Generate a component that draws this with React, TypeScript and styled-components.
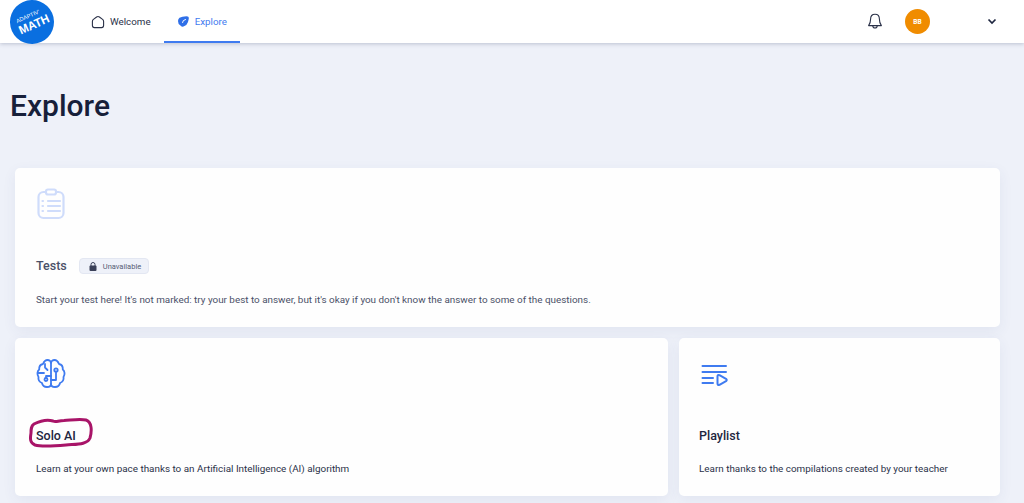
import React from "react";
import styled, { createGlobalStyle } from "styled-components";

const Global = createGlobalStyle`
  html, body { margin: 0; padding: 0; background: #eef1f9; }
  body { font-family: Roboto, "Liberation Sans", sans-serif; color: #1e2640; overflow: hidden; }
`;
const Page = styled.div`
  width: 1024px; height: 503px; overflow: hidden; display: flex; flex-direction: column;
`;
const Header = styled.header`
  height: 43px; flex: none; background: #fff; display: flex; align-items: stretch;
  box-shadow: 0 1px 4px rgba(40, 50, 90, 0.25); padding: 0 27px 0 10px; position: relative; z-index: 1;
`;
const Logo = styled.div`
  width: 44px; height: 44px; border-radius: 50%; background: #0a6fe0; color: #fff; flex: none;
  margin-right: 24px; display: flex; flex-direction: column; align-items: center; justify-content: center;
  transform: rotate(-24deg); line-height: 1; font-family: "Liberation Sans", sans-serif;
`;
const LogoSmall = styled.span`font-size: 5.6px; font-weight: 400; margin: 0 0 1px -3px;`;
const LogoBig = styled.span`font-size: 12px; font-weight: 700; margin-left: 2px; transform: scaleX(0.95);`;
const Tab = styled.div<{ $active?: boolean }>`
  display: flex; align-items: center; gap: 5px; padding: 0 13px; font-size: 9.8px; font-weight: 400;
  color: ${p => (p.$active ? "#3f7bf0" : "#2a3148")};
  box-shadow: ${p => (p.$active ? "inset 0 -2px 0 #3f7bf0" : "none")};
`;
const Spacer = styled.div`flex: 1;`;
const HeaderRight = styled.div`display: flex; align-items: center;`;
const Avatar = styled.div`
  width: 25px; height: 25px; border-radius: 50%; background: #f08c00; color: #fff; font-size: 6.5px; font-weight: 700;
  display: flex; align-items: center; justify-content: center; margin: 0 57px 0 22px;
`;
const Main = styled.main`padding: 0 24px 0 10px; display: flex; flex-direction: column;`;
const Title = styled.h1`
  margin: 46px 0 46px; font-size: 30px; line-height: 33px; font-weight: 500; color: #17203a;
`;
const Cards = styled.div`
  display: grid; grid-template-columns: 653px 321px; grid-template-rows: 159px 158px; gap: 11px; margin-left: 5px;
`;
const Card = styled.section<{ $wide?: boolean; $inset?: number }>`
  position: relative; background: #fefefe; border-radius: 5px; padding: 20px 20px 20px ${p => p.$inset ?? 21}px; box-sizing: border-box;
  display: flex; flex-direction: column; box-shadow: 0 4px 14px rgba(60, 75, 130, 0.07);
  grid-column: ${p => (p.$wide ? "1 / span 2" : "auto")};
`;
const IconSlot = styled.div`height: 34px; flex: none;`;
const TitleRow = styled.div`display: flex; align-items: center; gap: 12px; margin-top: 35px; height: 18px;`;
const CardTitle = styled.h2<{ $muted?: boolean }>`
  margin: 0; font-size: 12.5px; line-height: 18px; font-weight: 500; color: ${p => (p.$muted ? "#4a5068" : "#1e2640")};
`;
const Badge = styled.span`
  display: inline-flex; align-items: center; gap: 6px; height: 14px; padding: 0 7px 0 9px; border-radius: 4px;
  background: #eef1f9; border: 1px solid #e3e7f2; color: #565c74; font-size: 7.5px; font-weight: 400;
`;
const Desc = styled.p<{ $muted?: boolean }>`
  margin: auto 0 0; font-size: 9.9px; line-height: 14px; color: ${p => (p.$muted ? "#4a5068" : "#2a3148")};
`;
const Scribble = styled.svg`position: absolute; left: 13px; top: 79px; pointer-events: none;`;

export default function App() {
  return (
    <Page>
      <Global />
      <Header>
        <Logo>
          <LogoSmall>ADAPTIV'</LogoSmall>
          <LogoBig>MATH</LogoBig>
        </Logo>
        <Tab>
          <svg width="14" height="14" viewBox="0 0 14 14" fill="none" stroke="#2a3148" strokeWidth="1.1">
            <path d="M5.6 2 Q7 1 8.4 2 L11.6 4.4 Q12.6 5.2 12.6 6.4 V10.6 Q12.6 12.6 10.6 12.6 H3.4 Q1.4 12.6 1.4 10.6 V6.4 Q1.4 5.2 2.4 4.4 Z" strokeLinejoin="round" />
          </svg>
          Welcome
        </Tab>
        <Tab $active>
          <svg width="13" height="13" viewBox="0 0 13 13" fill="#2f6fe8">
            <path d="M2.5 2.8 Q5 1.2 9.5 1.2 Q12 1.2 11.8 3.5 Q11.5 5 11 7 Q10 10.5 6.5 11.6 Q4.2 12.2 3.2 10.3 Q1 9 1 6 Q1 4 2.5 2.8Z" />
            <path d="M5.5 7.5 Q5.5 5 8.5 4.5" fill="none" stroke="#fff" strokeWidth="1" strokeLinecap="round" />
          </svg>
          Explore
        </Tab>
        <Spacer />
        <HeaderRight>
          <svg width="16" height="17" viewBox="0 0 16 17" fill="none" stroke="#2a3148" strokeWidth="1.1" strokeLinejoin="round">
            <path d="M8 1.2 C5 1.2 3.6 3.4 3.6 6 C3.6 9.5 2.8 11 1.6 12.6 H14.4 C13.2 11 12.4 9.5 12.4 6 C12.4 3.4 11 1.2 8 1.2Z" />
            <path d="M5.8 12.8 C5.8 15.8 10.2 15.8 10.2 12.8" />
          </svg>
          <Avatar>BB</Avatar>
          <svg width="10" height="7" viewBox="0 0 10 7" fill="none" stroke="#1e2640" strokeWidth="1.7">
            <path d="M1.5 1.5 5 5 8.5 1.5" />
          </svg>
        </HeaderRight>
      </Header>
      <Main>
        <Title>Explore</Title>
        <Cards>
          <Card $wide>
            <IconSlot>
              <svg width="30" height="32" viewBox="0 0 30 32" fill="none" stroke="#cfdcfb" strokeWidth="2.2" strokeLinecap="round">
                <rect x="2.5" y="4" width="25" height="26" rx="5" />
                <rect x="10" y="1.5" width="10" height="5" rx="2" fill="#fff" />
                <path d="M12 13H24M12 18H24M12 23H24M6.5 13H7M6.5 18H7M6.5 23H7" />
              </svg>
            </IconSlot>
            <TitleRow>
              <CardTitle $muted>Tests</CardTitle>
              <Badge>
                <svg width="8" height="9" viewBox="0 0 8 9" fill="#3a4058">
                  <rect x="0.5" y="3.5" width="7" height="5.5" rx="1" />
                  <path d="M2 4V2.5a2 2 0 0 1 4 0V4" fill="none" stroke="#3a4058" strokeWidth="1" />
                </svg>
                Unavailable
              </Badge>
            </TitleRow>
            <Desc $muted>Start your test here! It's not marked: try your best to answer, but it's okay if you don't know the answer to some of the questions.</Desc>
          </Card>
          <Card>
            <IconSlot>
              <svg width="30" height="30" viewBox="0 0 30 30" fill="none" stroke="#3f7bf0" strokeWidth="1.8" strokeLinecap="round" strokeLinejoin="round">
                <path d="M15 5V26C15 28 13 29 11 29 8 29 6.5 27.5 6 25 3.5 24 2 22 2.5 19 1 17 1 13 3.2 11.5 3 8.5 4.5 6.5 7 6 8 3.5 9.5 2 11.5 2 13.5 2 15 3.5 15 5Z" />
                <path d="M15 5C15 3.5 16.5 2 18.5 2 20.5 2 22 3.5 23 6 25.5 6.5 27 8.5 26.8 11.5 29 13 29 17 27.5 19 28 22 26.5 24 24 25 23.5 27.5 22 29 19 29 17 29 15 28 15 26" />
                <path d="M15 18H10V20M2.5 15H8M9 6V9.5L11.5 12" />
                <circle cx="10" cy="21.5" r="1.5" />
                <path d="M15 22H20V14" />
                <circle cx="20" cy="12" r="1.7" />
              </svg>
            </IconSlot>
            <TitleRow>
              <CardTitle>Solo AI</CardTitle>
            </TitleRow>
            <Desc>Learn at your own pace thanks to an Artificial Intelligence (AI) algorithm</Desc>
            <Scribble width="66" height="34" viewBox="0 0 66 34" fill="none">
              <path d="M6 7C14 3 20 2.5 25 4 28 5.5 30 3.5 36 3.5 44 3 52 1.5 58 3 64 5 64 14 62 21 59 28 48 27 38 28 26 29 14 30 7 28 2 26 2 22 3 16 3 12 3 9 6 7Z" stroke="#a81468" strokeWidth="3" strokeLinecap="round" strokeLinejoin="round" />
            </Scribble>
          </Card>
          <Card $inset={20}>
            <IconSlot>
              <svg width="28" height="24" viewBox="0 0 28 24" fill="none" stroke="#3f7bf0" strokeWidth="2" strokeLinecap="round" strokeLinejoin="round" style={{ marginTop: 4, marginLeft: 2 }}>
                <path d="M1.5 4H25M1.5 10H25M1.5 16H12M1.5 21H12" />
                <path d="M16.5 14.5Q16.5 12.5 18.5 13.2L25 16.8Q26.5 18 25 19.2L18.5 22.8Q16.5 23.5 16.5 21.5Z" />
              </svg>
            </IconSlot>
            <TitleRow>
              <CardTitle>Playlist</CardTitle>
            </TitleRow>
            <Desc>Learn thanks to the compilations created by your teacher</Desc>
          </Card>
        </Cards>
      </Main>
    </Page>
  );
}
